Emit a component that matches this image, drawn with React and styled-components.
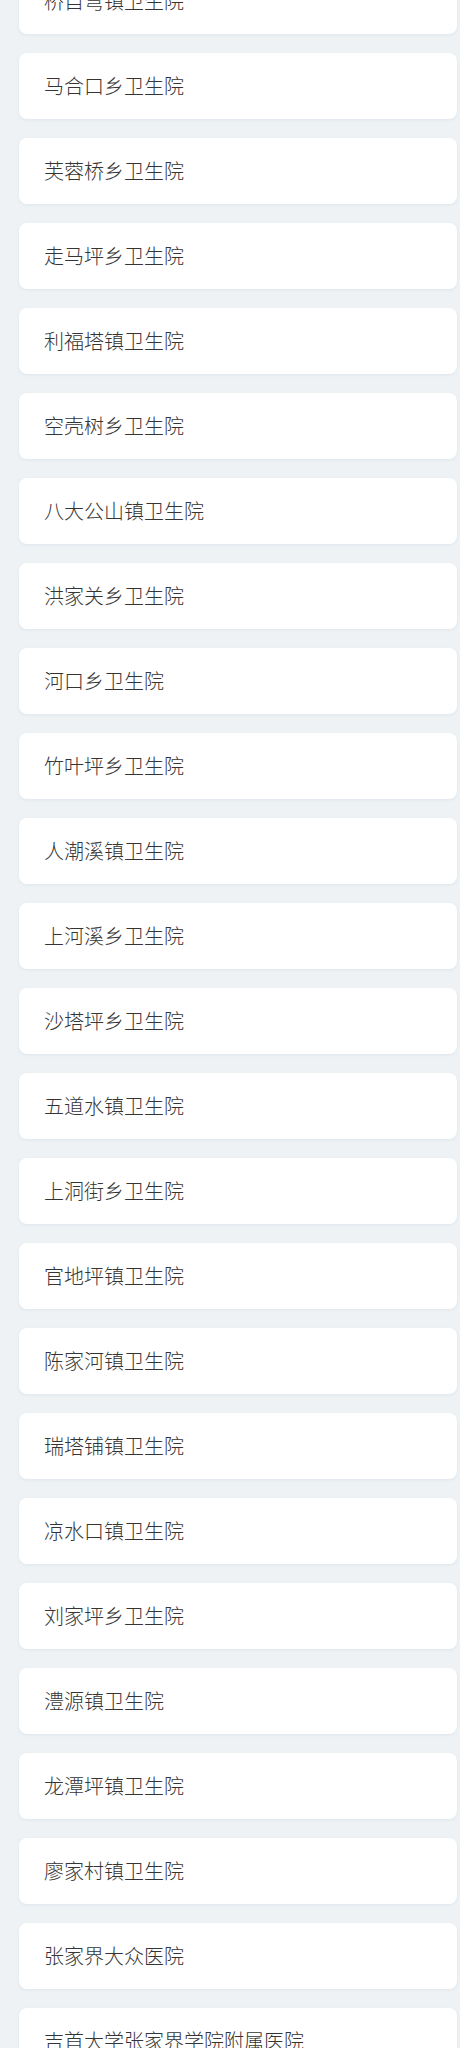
import React from "react";
import styled, { createGlobalStyle } from "styled-components";

const Global = createGlobalStyle`
  html, body {
    margin: 0;
    padding: 0;
    background: #eef2f5;
  }
  body {
    font-family: "Noto Sans CJK SC", "Noto Sans", sans-serif;
  }
`;

const Page = styled.div`
  width: 460px;
  height: 2048px;
  overflow: hidden;
  background: #eef2f5;
`;

const List = styled.ul`
  list-style: none;
  margin: -32px 0 0 0;
  padding: 0 3px 0 19px;
  display: flex;
  flex-direction: column;
  gap: 19px;
`;

const Card = styled.li`
  height: 66px;
  box-sizing: border-box;
  background: #ffffff;
  border-radius: 8px;
  box-shadow: 0 1px 3px rgba(150, 170, 190, 0.18);
  display: flex;
  align-items: center;
  padding-left: 25px;
  font-size: 20px;
  font-weight: 300;
  color: #353535;
  line-height: 1;
`;

const names = [
  "桥自弯镇卫生院",
  "马合口乡卫生院",
  "芙蓉桥乡卫生院",
  "走马坪乡卫生院",
  "利福塔镇卫生院",
  "空壳树乡卫生院",
  "八大公山镇卫生院",
  "洪家关乡卫生院",
  "河口乡卫生院",
  "竹叶坪乡卫生院",
  "人潮溪镇卫生院",
  "上河溪乡卫生院",
  "沙塔坪乡卫生院",
  "五道水镇卫生院",
  "上洞街乡卫生院",
  "官地坪镇卫生院",
  "陈家河镇卫生院",
  "瑞塔铺镇卫生院",
  "凉水口镇卫生院",
  "刘家坪乡卫生院",
  "澧源镇卫生院",
  "龙潭坪镇卫生院",
  "廖家村镇卫生院",
  "张家界大众医院",
  "吉首大学张家界学院附属医院",
];

export default function App() {
  return (
    <Page>
      <Global />
      <List>
        {names.map((n) => (
          <Card key={n}>{n}</Card>
        ))}
      </List>
    </Page>
  );
}
